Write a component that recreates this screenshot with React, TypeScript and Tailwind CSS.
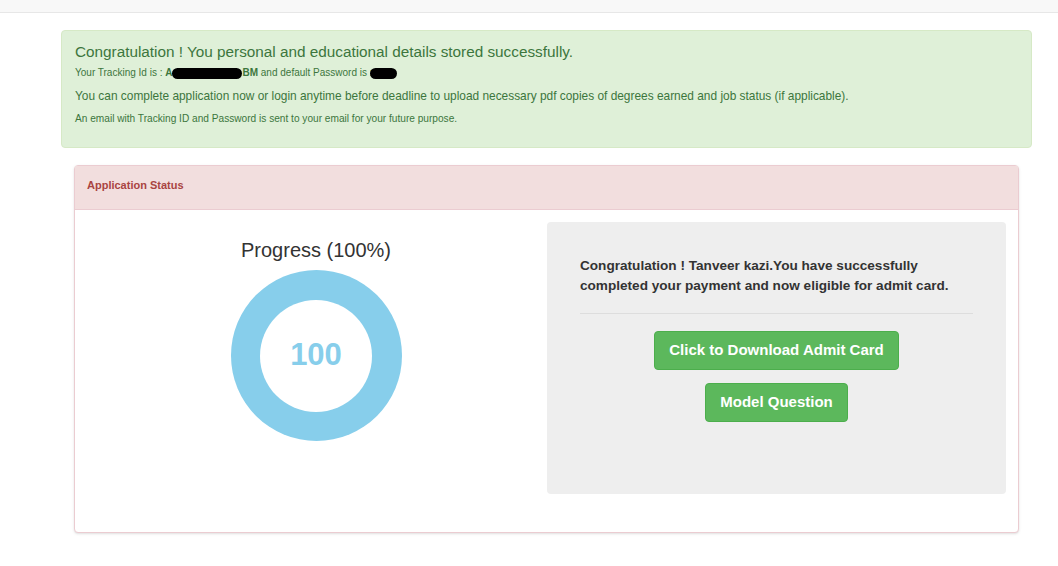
export default function App(): JSX.Element {
  return (
    <div className="min-h-[566px] bg-white font-['Liberation_Sans',Arial,sans-serif]">
      <div className="h-[13px] border-b border-[#e7e7e7] bg-[#f8f8f8]" />

      <div className="ml-[61px] mt-[17px] w-[971px] rounded border border-[#d6e9c6] bg-[#dff0d8] px-[13px] pb-[21px] pt-[10px] text-[#3c763d]">
        <h4 className="text-[15.3px] leading-[22px]">
          Congratulation ! You personal and educational details stored successfully.
        </h4>
        <p className="mt-[2px] flex items-center text-[10px] leading-[16px]">
          Your Tracking Id is :&nbsp;<b>A</b>
          <span className="inline-block h-[11px] w-[70px] rounded-full bg-black" />
          <b>BM</b>&nbsp;and default Password is :
          <span className="-ml-[3px] inline-block h-[11px] w-[27px] rounded-full bg-black" />
        </p>
        <p className="mt-[7px] text-[11.9px] leading-[17px]">
          You can complete application now or login anytime before deadline to upload necessary pdf copies of degrees earned and job status (if applicable).
        </p>
        <p className="mt-[7px] text-[10.15px] leading-[14px]">
          An email with Tracking ID and Password is sent to your email for your future purpose.
        </p>
      </div>

      <div className="ml-[74px] mt-[17px] w-[945px] rounded border border-[#ebccd1] bg-white shadow-sm">
        <div className="h-[44px] border-b border-[#ebccd1] bg-[#f2dede] px-[12px] pt-[11px] text-[11px] font-bold text-[#a94442]">
          Application Status
        </div>
        <div className="flex pb-[38px] pt-[12px]">
          <div className="flex w-[472px] flex-col items-center pl-[10px] pt-[14px]">
            <div className="text-[20px] leading-[28px] text-[#333]">Progress (100%)</div>
            <div className="mt-[6px] flex h-[171px] w-[171px] items-center justify-center rounded-full bg-[#87ceeb]">
              <div className="flex h-[112px] w-[112px] items-center justify-center rounded-full bg-white">
                <span className="text-[31px] font-bold text-[#87ceeb]">100</span>
              </div>
            </div>
          </div>
          <div className="h-[272px] w-[459px] rounded bg-[#eeeeee] px-[33px] pt-[34px]">
            <p className="text-[13.6px] font-bold leading-[20px] text-[#333]">
              Congratulation ! Tanveer kazi.You have successfully completed your payment and now eligible for admit card.
            </p>
            <hr className="mt-[17px] border-t border-[#dddddd]" />
            <div className="mt-[17px] flex flex-col items-center gap-[13px]">
              <button className="h-[39px] rounded border border-[#4cae4c] bg-[#5cb85c] px-[14px] text-[15px] font-bold text-white">
                Click to Download Admit Card
              </button>
              <button className="h-[39px] rounded border border-[#4cae4c] bg-[#5cb85c] px-[14px] text-[15px] font-bold text-white">
                Model Question
              </button>
            </div>
          </div>
        </div>
      </div>
    </div>
  )
}
